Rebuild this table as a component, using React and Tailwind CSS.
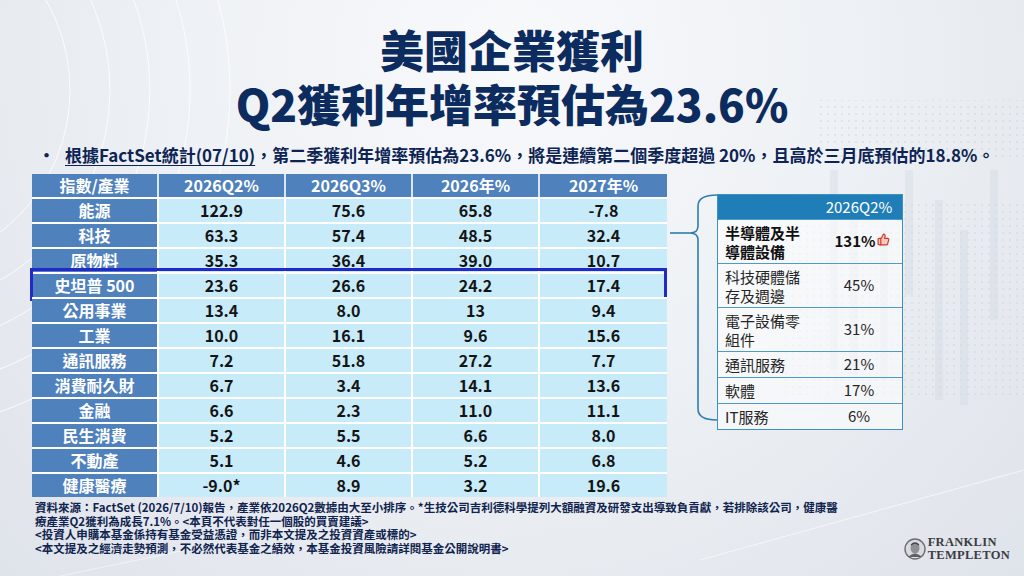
import React from 'react';
import { ThumbsUp } from 'lucide-react';

const rows = [
  ['能源', '122.9', '75.6', '65.8', '-7.8'],
  ['科技', '63.3', '57.4', '48.5', '32.4'],
  ['原物料', '35.3', '36.4', '39.0', '10.7'],
  ['史坦普 500', '23.6', '26.6', '24.2', '17.4'],
  ['公用事業', '13.4', '8.0', '13', '9.4'],
  ['工業', '10.0', '16.1', '9.6', '15.6'],
  ['通訊服務', '7.2', '51.8', '27.2', '7.7'],
  ['消費耐久財', '6.7', '3.4', '14.1', '13.6'],
  ['金融', '6.6', '2.3', '11.0', '11.1'],
  ['民生消費', '5.2', '5.5', '6.6', '8.0'],
  ['不動產', '5.1', '4.6', '5.2', '6.8'],
  ['健康醫療', '-9.0*', '8.9', '3.2', '19.6'],
];

const sectors = [
  { name: ['半導體及半', '導體設備'], value: '131%', bold: true },
  { name: ['科技硬體儲', '存及週邊'], value: '45%' },
  { name: ['電子設備零', '組件'], value: '31%' },
  { name: ['通訊服務'], value: '21%' },
  { name: ['軟體'], value: '17%' },
  { name: ['IT服務'], value: '6%' },
];

const Backdrop = () => (
  <svg className="absolute inset-0 pointer-events-none" width="1024" height="576">
    <defs>
      <pattern id="dots" width="7" height="7" patternUnits="userSpaceOnUse">
        <circle cx="2" cy="2" r="1.1" fill="#c3ccd9" />
      </pattern>
    </defs>
    {[180, 220, 260, 300, 340].map((r) => (
      <circle key={r} cx="-110" cy="90" r={r} fill="none" stroke="#ffffff" strokeOpacity="0.8" strokeWidth="1" />
    ))}
    <rect x="820" y="100" width="204" height="60" fill="url(#dots)" opacity="0.45" />
    <rect x="780" y="200" width="244" height="200" fill="url(#dots)" opacity="0.4" />
    {[830, 850, 880, 905, 935, 960, 990].map((x, i) => (
      <rect key={x} x={x} y={170 + (i % 3) * 30} width="8" height={200 - (i % 4) * 25} fill="#d3d9e4" opacity="0.4" />
    ))}
    <line x1="700" y1="560" x2="1024" y2="470" stroke="#ffffff" strokeOpacity="0.6" />
    <line x1="60" y1="576" x2="380" y2="510" stroke="#ffffff" strokeOpacity="0.5" />
  </svg>
);

const Logo = () => (
  <div className="flex items-center gap-[2px]">
    <svg width="22" height="22" viewBox="0 0 22 22">
      <circle cx="11" cy="11" r="10" fill="#d9dbdf" stroke="#6b6e74" strokeWidth="1.4" />
      <ellipse cx="11" cy="10" rx="4.5" ry="5.5" fill="#8c8f95" />
      <path d="M4 19 Q11 12 18 19" fill="#5d6067" />
      <path d="M7 7 Q11 3 15 7" stroke="#45484e" strokeWidth="1.2" fill="none" />
    </svg>
    <div className="font-['Liberation_Serif',serif] text-[12.5px] leading-[12.5px] font-semibold tracking-[0.3px] text-[#3b3d42]">
      <div>FRANKLIN</div>
      <div>TEMPLETON</div>
    </div>
  </div>
);

export default function App() {
  return (
    <div className="relative w-[1024px] h-[576px] overflow-hidden bg-[radial-gradient(ellipse_at_50%_10%,#f8f9fb_0%,#eef1f5_45%,#dfe3ea_100%)] font-['Noto_Sans_CJK_TC','Noto_Sans',sans-serif]">
      <Backdrop />
      <div className="relative flex flex-col">
        <div className="pt-[22px] text-center text-[44px] leading-[54px] font-black text-[#0c2b5e]">
          <div>美國企業獲利</div>
          <div>Q2獲利年增率預估為23.6%</div>
        </div>

        <div className="mt-[14px] flex items-center pl-[38px] text-[17px] leading-[22px] font-bold text-[#0d2454]">
          <span className="w-[27px]">•</span>
          <span>
            <span className="underline underline-offset-[3px]">根據FactSet統計(07/10)</span>
            ，第二季獲利年增率預估為23.6%，將是連續第二個季度超過 20%，且高於三月底預估的18.8%。
          </span>
        </div>

        <div className="mt-[8px] flex items-start">
          <div className="ml-[32px] w-[635px] flex flex-col">
            <div className="grid grid-cols-5 h-[23px] bg-[#4f81bd] text-white font-bold text-[16px] leading-[23px]">
              {['指數/產業', '2026Q2%', '2026Q3%', '2026年%', '2027年%'].map((h, i) => (
                <div key={h} className={`text-center ${i < 4 ? 'border-r-2 border-white/80' : ''}`}>{h}</div>
              ))}
            </div>
            {rows.map((r, ri) => (
              <div key={r[0]} className="relative grid grid-cols-5 h-[25px] border-t-2 border-white">
                {r.map((c, ci) => (
                  <div
                    key={ci}
                    className={`text-center text-[16px] leading-[23px] ${ci < 4 ? 'border-r-2 border-white' : ''} ${
                      ci === 0 ? 'bg-[#4f81bd] text-white font-bold' : 'bg-[#c8ebf9] text-[#141414] font-semibold'
                    }`}
                  >
                    {c}
                  </div>
                ))}
                {ri === 3 && (
                  <div className="absolute -top-[6px] -bottom-[4px] -left-[2px] right-0 border-[3px] border-[#2229c8]" />
                )}
              </div>
            ))}
          </div>

          <svg width="50" height="240" className="mt-[16px] shrink-0">
            <path d="M3 43 L23 43" stroke="#2d7db0" strokeWidth="1.6" fill="none" />
            <path
              d="M50 5 Q31 5 31 16 L31 36 Q31 43 23 43 Q31 43 31 50 L31 219 Q31 230 50 230"
              stroke="#2d7db0"
              strokeWidth="1.6"
              fill="none"
            />
          </svg>

          <div className="mt-[20px] w-[186px] border border-[#3e8fc2] text-[15px] text-[#262626]">
            <div className="grid grid-cols-[98px_1fr] h-[24px] bg-[#1f7db7] text-white leading-[24px]">
              <div />
              <div className="text-center">2026Q2%</div>
            </div>
            {sectors.map((s) => (
              <div
                key={s.value}
                className={`grid grid-cols-[98px_1fr] items-center border-t border-[#4d9acb] bg-white/55 ${
                  s.name.length > 1 ? 'h-[44px]' : 'h-[26px]'
                }`}
              >
                <div className={`pl-[7px] leading-[19px] ${s.bold ? 'font-bold text-[#111]' : ''}`}>
                  {s.name.map((n) => (
                    <div key={n}>{n}</div>
                  ))}
                </div>
                <div className={`flex items-center justify-center ${s.bold ? 'font-bold text-[#111] pl-[6px]' : ''}`}>
                  {s.value}
                  {s.bold && <ThumbsUp size={13} color="#d33a2c" fill="#f6c9c0" strokeWidth={2.2} className="ml-[1px] -mt-[4px]" />}
                </div>
              </div>
            ))}
          </div>
        </div>

        <div className="mt-[4px] flex items-end">
          <div className="pl-[35px] text-[11.5px] leading-[13.6px] font-bold text-[#10244f]">
            <div>資料來源：FactSet (2026/7/10)報告，產業依2026Q2數據由大至小排序。*生技公司吉利德科學提列大額融資及研發支出導致負貢獻，若排除該公司，健康醫</div>
            <div>療產業Q2獲利為成長7.1%。&lt;本頁不代表對任一個股的買賣建議&gt;</div>
            <div>&lt;投資人申購本基金係持有基金受益憑證，而非本文提及之投資資產或標的&gt;</div>
            <div>&lt;本文提及之經濟走勢預測，不必然代表基金之績效，本基金投資風險請詳閱基金公開說明書&gt;</div>
          </div>
          <div className="ml-auto mr-[14px] -mb-[6px]">
            <Logo />
          </div>
        </div>
      </div>
    </div>
  );
}
